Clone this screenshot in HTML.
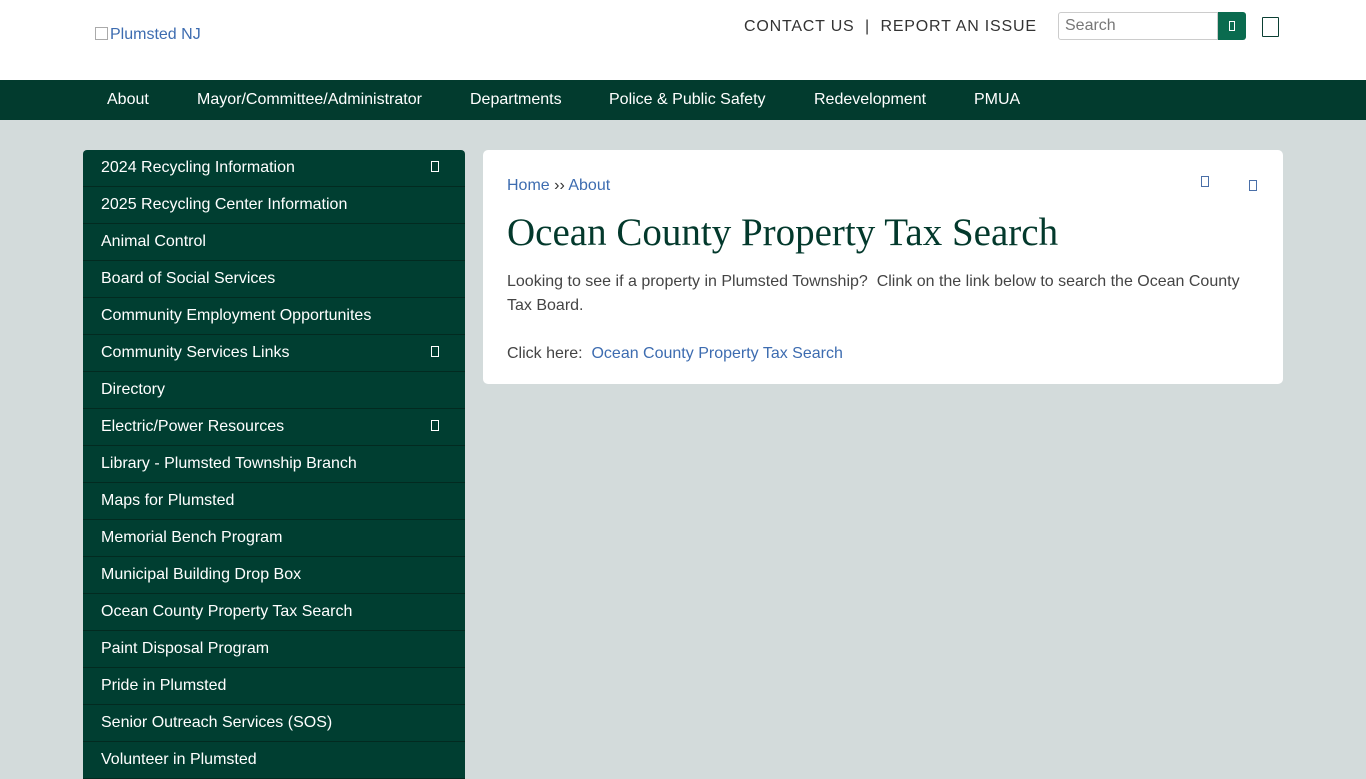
<!DOCTYPE html>
<html><head><meta charset="utf-8"><style>
*{box-sizing:border-box;margin:0;padding:0}
body{width:1366px;height:768px;overflow:hidden;background:#d3dbdb;font-family:"Liberation Sans",sans-serif}
.top{height:80px;background:#fff;position:relative}
.logo{position:absolute;left:95px;top:26px;font-size:16px;color:#3d6cb0}
.logo i{display:inline-block;width:13px;height:13px;border:1px solid #aaa;margin-right:2px;vertical-align:-1px}
.links{position:absolute;left:744px;top:18px;font-size:16px;letter-spacing:0.8px;color:#333}
.search{position:absolute;left:1058px;top:12px;width:160px;height:28px;border:1px solid #ccc;border-radius:3px 0 0 3px;font-size:16px;color:#777;padding:4px 6px}
.sbtn{position:absolute;left:1218px;top:12px;width:28px;height:28px;background:#0a6b4f;border-radius:0 3px 3px 0}
.sbtn i{position:absolute;left:11px;top:9px;width:6px;height:10px;border:1px solid #fff}
.box{position:absolute;border:1.5px solid #0b3f33;border-radius:1px}
.nav{height:40px;background:#023b2e;position:relative}
.nav span{position:absolute;top:11px;color:#fff;font-size:16px}
.side{position:absolute;left:83px;top:150px;width:382px;background:#003e31;border-radius:4px 4px 0 0}
.side div{height:37px;border-bottom:1px solid #022a20;color:#fff;font-size:16px;padding:9px 18px;position:relative}
.side div i{position:absolute;left:348px;top:11px;width:8px;height:11px;border:1px solid #fff}
.main{position:absolute;left:483px;top:150px;width:800px;height:234px;background:#fff;border-radius:5px}
.bc{position:absolute;left:24px;top:27px;font-size:16px;color:#3d6cb0}
.bc b{font-weight:normal;color:#333}
h1{position:absolute;left:24px;top:60px;font-family:"Liberation Serif",serif;font-weight:normal;font-size:39px;color:#03392c}
.p{position:absolute;left:24px;top:120px;width:750px;font-size:16px;line-height:24px;color:#444}
.p a{color:#3d6cb0;text-decoration:none}
.ic{position:absolute;width:8px;height:11px;border:1px solid #4a6fa8}
</style></head><body>
<div class="top">
<div class="logo"><i></i>Plumsted NJ</div>
<div class="links">CONTACT US &nbsp;| &nbsp;REPORT AN ISSUE</div>
<div class="search">Search</div>
<div class="sbtn"><i></i></div>
<div class="box" style="left:1262px;top:17px;width:17px;height:20px"></div>
</div>
<div class="nav">
<span style="left:107px">About</span>
<span style="left:197px">Mayor/Committee/Administrator</span>
<span style="left:470px">Departments</span>
<span style="left:609px">Police &amp; Public Safety</span>
<span style="left:814px">Redevelopment</span>
<span style="left:974px">PMUA</span>
</div>
<div class="side">
<div>2024 Recycling Information<i></i></div>
<div>2025 Recycling Center Information</div>
<div>Animal Control</div>
<div>Board of Social Services</div>
<div>Community Employment Opportunites</div>
<div>Community Services Links<i></i></div>
<div>Directory</div>
<div>Electric/Power Resources<i></i></div>
<div>Library - Plumsted Township Branch</div>
<div>Maps for Plumsted</div>
<div>Memorial Bench Program</div>
<div>Municipal Building Drop Box</div>
<div>Ocean County Property Tax Search</div>
<div>Paint Disposal Program</div>
<div>Pride in Plumsted</div>
<div>Senior Outreach Services (SOS)</div>
<div>Volunteer in Plumsted</div>
</div>
<div class="main">
<div class="bc">Home <b>››</b> About</div>
<div class="ic" style="left:718px;top:26px"></div>
<div class="ic" style="left:766px;top:30px"></div>
<h1>Ocean County Property Tax Search</h1>
<div class="p">Looking to see if a property in Plumsted Township?&nbsp; Clink on the link below to search the Ocean County Tax Board.<br><br>Click here:&nbsp; <a>Ocean County Property Tax Search</a></div>
</div>
</body></html>
